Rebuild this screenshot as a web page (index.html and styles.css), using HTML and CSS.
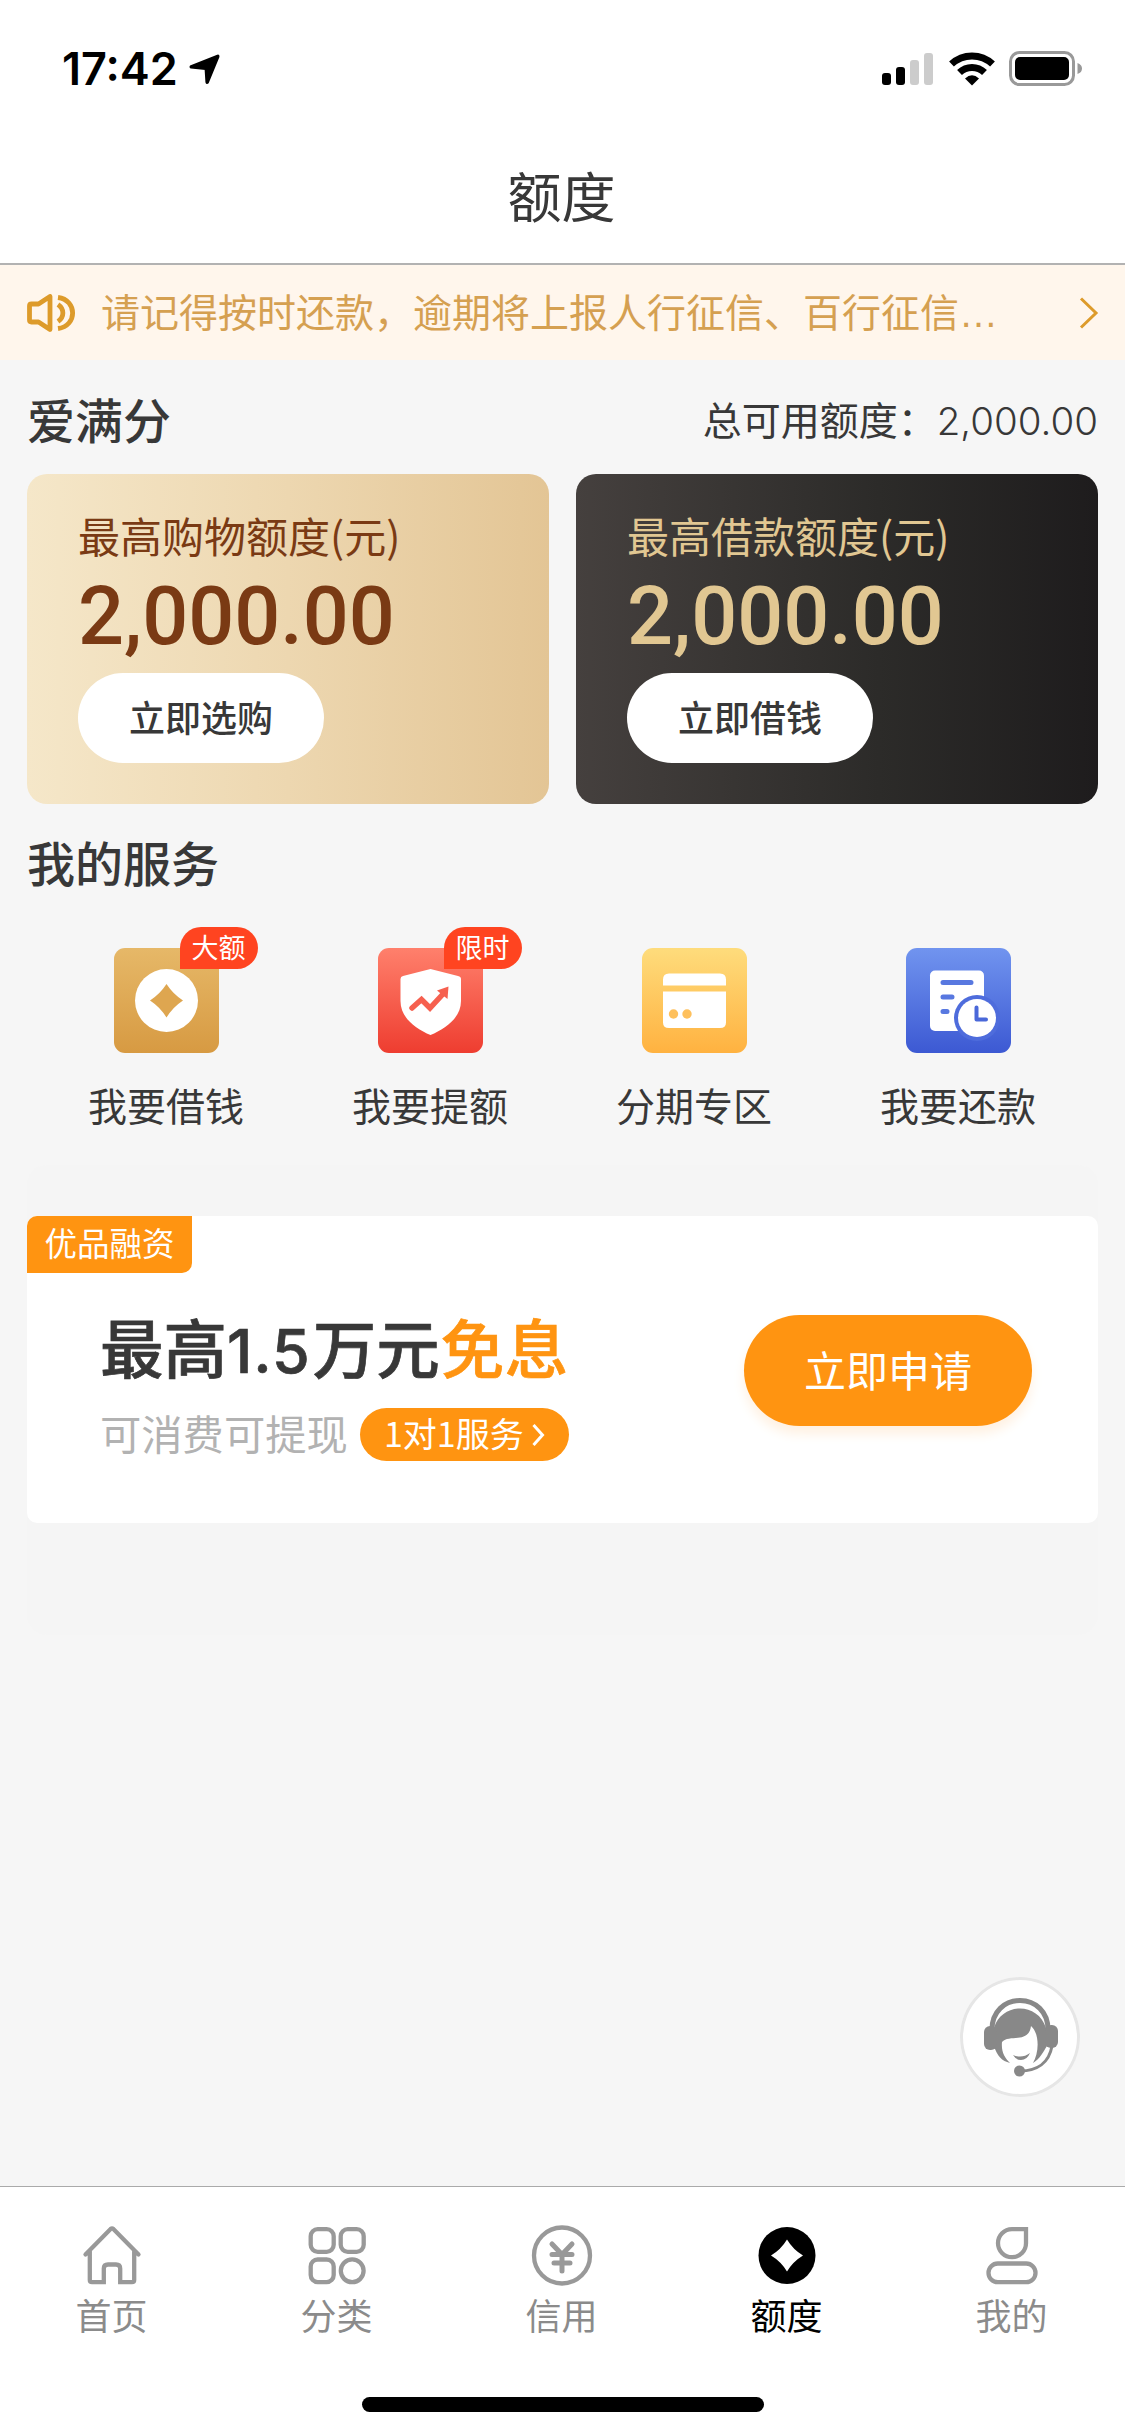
FILE: index.html
```html
<!DOCTYPE html>
<html lang="zh-CN">
<head>
<meta charset="utf-8">
<title>额度</title>
<link rel="stylesheet" href="styles.css">
</head>
<body>
<div class="app">
  <header class="status">
    <div class="status-left">
      <span class="time">17:42</span>
      <svg class="loc" width="31" height="31" viewBox="0 0 31 31"><path d="M28.500 1.500L2 12Q.8 13 2 13.700L16.500 15.200L17.300 28Q17.700 29.800 19 28.500L29.500 3Q29.900 1 28.500 1.500Z" stroke="#000" stroke-width="1.800" stroke-linejoin="round"/></svg>
    </div>
    <div class="status-right">
      <svg width="54" height="34" viewBox="0 0 54 34"><rect x="1" y="21" width="9" height="12" rx="3"/><rect x="15" y="15" width="9" height="18" rx="3"/><rect x="29" y="8" width="9" height="25" rx="3" fill="#ccc"/><rect x="43" y="1" width="9" height="32" rx="3" fill="#ccc"/></svg>
      <svg width="46" height="34" viewBox="0 0 46 34"><g fill="none" stroke="#000" stroke-width="7"><path d="M2.500 12A30 30 0 0 1 43.500 12"/><path d="M10.500 20.500A18 18 0 0 1 35.500 20.500"/></g><path d="M23 33.500L16 26.500Q23 20 30 26.500Z"/></svg>
      <svg width="74" height="36" viewBox="0 0 74 36"><rect x="1.500" y="1.500" width="63" height="32" rx="9" fill="none" stroke="#999" stroke-width="3"/><rect x="6" y="6" width="54" height="23" rx="5"/><path d="M68.500 12Q73 13.500 73 17.500T68.500 23Z" fill="#999"/></svg>
    </div>
  </header>
  <h1 class="title">额度</h1>
  <div class="notice">
    <svg class="speaker" width="50" height="38" viewBox="0 0 50 38"><g fill="none" stroke="#dd9b2b" stroke-width="4.800" stroke-linejoin="round"><path d="M3.500 12Q3.500 10 5.500 10H12.500L24 2.500V35.500L12.500 28H5.500Q3.500 28 3.500 26Z"/><path d="M32 10.500C38.500 15 38.500 23 32 27.500"/><path d="M32 3.500C51.500 6 51.500 32 32 34.500"/></g></svg>
    <span class="notice-text">请记得按时还款，逾期将上报人行征信、百行征信<span class="dots">…</span></span>
    <svg width="20" height="32" viewBox="0 0 20 32"><path d="M2 1.500L17 16L2 30.500" fill="none" stroke="#dd9b2b" stroke-width="3"/></svg>
  </div>
  <main class="main">
    <div class="summary"><h2>爱满分</h2><p>总可用额度：<span class="total">2,000.00</span></p></div>
    <div class="cards">
      <section class="card gold"><p>最高购物额度(元)</p><strong>2,000.00</strong><button>立即选购</button></section>
      <section class="card dark"><p>最高借款额度(元)</p><strong>2,000.00</strong><button>立即借钱</button></section>
    </div>
    <h2 class="heading">我的服务</h2>
    <div class="services">
      <div class="service"><div class="tile t1">
        <svg viewBox="0 0 105 105"><circle cx="52.500" cy="52.500" r="31.500" fill="#fff"/><path d="M52.500 36Q59 46 69 52.500Q59 59 52.500 69.500Q46 59 36 52.500Q46 46 52.500 36Z" fill="#dea650"/></svg>
        <em>大额</em></div><span>我要借钱</span></div>
      <div class="service"><div class="tile t2">
        <svg viewBox="0 0 105 105"><path d="M52.500 21L80 28Q83 28.500 83 31V53C83 70 67 81 52.500 87C38 81 22.500 70 22.500 53V31Q22.500 28.500 25 28Z" fill="#fff"/><path d="M34 60L43.500 51.500L52 60L65 46" fill="none" stroke="#f6604f" stroke-width="5.500" stroke-linecap="round"/><path d="M59 42.500L70.500 38.500L69.500 51Z" fill="#f6604f"/></svg>
        <em>限时</em></div><span>我要提额</span></div>
      <div class="service"><div class="tile t3">
        <svg viewBox="0 0 105 105"><path d="M27 25.500H78Q84 25.500 84 31.500V37.500H21V31.500Q21 25.500 27 25.500ZM21 43.500H84V74.500Q84 80 78 80H27Q21 80 21 74.500Z" fill="#fff"/><circle cx="31.500" cy="66" r="4.700" fill="#fec05c"/><circle cx="45" cy="66" r="4.700" fill="#fec05c"/></svg>
        </div><span>分期专区</span></div>
      <div class="service"><div class="tile t4">
        <svg viewBox="0 0 105 105"><rect x="24" y="22.500" width="54" height="60.500" rx="5" fill="#fff"/><path d="M37 34.500H65M37 49H46M37 63.500H41" stroke="#5878e0" stroke-width="5" stroke-linecap="round"/><circle cx="71" cy="70" r="23" fill="#4e6cdc"/><circle cx="71" cy="70" r="19" fill="#fff"/><path d="M70.500 59.500V71.500H80" fill="none" stroke="#4a68d9" stroke-width="4" stroke-linecap="round" stroke-linejoin="round"/></svg>
        </div><span>我要还款</span></div>
    </div>
    <div class="promo"><section class="offer">
      <span class="tag">优品融资</span>
      <div class="offer-copy">
        <h3>最高<i>1.5</i>万元<b>免息</b></h3>
        <div class="offer-sub"><span>可消费可提现</span><span class="pill"><span>1对1服务</span><svg width="13" height="24" viewBox="0 0 13 24"><path d="M1.500 2L10.500 12L1.500 22" fill="none" stroke="#fff" stroke-width="3"/></svg></span></div>
      </div>
      <button class="apply">立即申请</button>
    </section></div>
  </main>
  <button class="support" aria-label="客服">
    <svg width="120" height="120" viewBox="0 0 120 120"><path d="M32 55C30 13 90 13 88 55" fill="none" stroke="#888" stroke-width="5"/><path d="M34 51C42 25 78 25 86 51L87 69C83 75 80 82 73 86C79 76 80 57 71 49C69 67 49 57 42 65C41 75 45 81 50 86C42 84 37 79 34 69Z" fill="#888"/><rect x="24" y="49" width="13" height="24" rx="6" fill="#888"/><rect x="85" y="48" width="13" height="23" rx="6" fill="#888"/><path d="M53 78Q62 82 70 76Q67 83 61 83Q56 83 53 78Z" fill="#888"/><path d="M92 69C89 86 77 94 60 94" fill="none" stroke="#888" stroke-width="3"/><circle cx="59.500" cy="94" r="5.500" fill="#888"/></svg>
  </button>
  <nav class="tabs">
    <div class="tab"><svg viewBox="0 0 64 64"><path d="M5.500 30.500L30.600 5Q32 3.800 33.400 5L58.500 30.500M9.800 27V56Q9.800 58.200 12 58.200H23.800V44.500Q23.800 40.500 28 40.500H36Q40.200 40.500 40.200 44.500V58.200H52Q54.200 58.200 54.200 56V27"/></svg><span>首页</span></div>
    <div class="tab"><svg viewBox="0 0 64 64"><rect x="5.700" y="5.200" width="23" height="22.600" rx="7"/><rect x="35.700" y="5.200" width="23" height="22.600" rx="7"/><rect x="5.700" y="35.500" width="23" height="22.600" rx="7"/><circle cx="47.200" cy="46.800" r="11.400"/></svg><span>分类</span></div>
    <div class="tab"><svg viewBox="0 0 64 64"><circle cx="32" cy="31.500" r="28"/><path d="M22 20L32 30.500L42 20M22 30.500H42M24 39H40M32 30.500V47" stroke-width="5"/></svg><span>信用</span></div>
    <div class="tab active"><svg viewBox="0 0 64 64"><circle cx="32" cy="31.500" r="28.500" fill="#000" stroke="none"/><path d="M32 15.500Q38 25.500 48 31.500Q38 37.500 32 47.500Q26 37.500 16 31.500Q26 25.500 32 15.500Z" fill="#fff" stroke="none"/></svg><span>额度</span></div>
    <div class="tab"><svg viewBox="0 0 64 64"><path d="M46 5.200V19A14 14 0 1 1 32 5.200Z" stroke-linejoin="miter"/><rect x="8.500" y="39.500" width="47" height="18.700" rx="9.300"/></svg><span>我的</span></div>
  </nav>
  <div class="home-row"><div class="home-indicator"></div></div>
</div>
</body>
</html>
```
FILE: styles.css
```css
* { box-sizing: border-box; margin: 0; padding: 0; }
body { font-family: "Noto Sans CJK SC", sans-serif; color: #383838; background: #f6f6f6; }
button { font: inherit; border: 0; color: inherit; }
svg { display: block; flex: none; }
.app { width: 1125px; height: 2436px; display: flex; flex-direction: column; position: relative; }

.status { height: 132px; padding: 6px 42px 0 62px; background: #fff; display: flex; justify-content: space-between; align-items: center; }
.status-left, .status-right { display: flex; align-items: center; }
.status-left { gap: 11px; }
.status-right { gap: 14px; }
.time { font: 600 45px/60px Inter, sans-serif; color: #000; }
.title { height: 133px; background: #fff; border-bottom: 2px solid #b2b2b2; font-size: 54px; font-weight: 400; line-height: 126px; text-align: center; padding-right: 2px; }
.notice { height: 95px; background: #fff6ec; color: #d5a051; display: flex; align-items: center; padding: 0 26px; }
.speaker { margin-right: 25px; }
.notice-text { flex: 1; font-size: 39px; line-height: 91px; height: 95px; white-space: nowrap; }
.dots { font-family: "Liberation Sans", sans-serif; }

.main { flex: 1; padding: 0 27px; }
.summary { height: 114px; display: flex; justify-content: space-between; align-items: center; padding-top: 1px; font-size: 39px; }
.total { font: 300 38.500px Inter, sans-serif; }
h2 { font-size: 48px; font-weight: 500; line-height: 72px; }
.cards { display: grid; grid-template-columns: 1fr 1fr; gap: 27px; }
.card { height: 330px; border-radius: 20px; padding: 31px 51px 0; display: flex; flex-direction: column; align-items: flex-start; }
.card p { font-size: 42px; line-height: 60px; }
.card strong { margin-top: 4px; font: 500 81px/96px Roboto, sans-serif; }
.card button { width: 246px; height: 90px; margin-top: 8px; padding-bottom: 4px; border-radius: 45px; background: #fff; color: #383838; font-size: 36px; font-weight: 500; }
.gold { background: linear-gradient(90deg, #f5e7c9, #edd7b0 50%, #e3c595); color: #7a3a14; }
.dark { background: linear-gradient(90deg, #45403e, #2c2b29 58%, #1e1c1d); color: #e1c792; }
.heading { margin-top: 21px; }
.services { display: grid; grid-template-columns: repeat(4, 264px); justify-content: center; margin-top: 51px; padding-right: 1px; }
.service { display: flex; flex-direction: column; align-items: center; font-size: 39px; line-height: 58px; gap: 22px; }
.tile { width: 105px; height: 105px; border-radius: 11px; position: relative; }
.tile em { position: absolute; left: 66px; top: -21px; width: 78px; height: 42px; border-radius: 21px 21px 21px 0; background: #ff4420; color: #fff; font-style: normal; font-size: 27px; line-height: 39px; text-align: center; }
.t1 { background: linear-gradient(#e6b868, #d79a42); }
.t2 { background: linear-gradient(#ff806c, #ee3d30); }
.t3 { background: linear-gradient(#fedc7c, #ffb240); }
.t4 { background: linear-gradient(#7194ef, #3c59d3); }

.promo { height: 470px; margin-top: 32px; padding-top: 51px; background: #f5f5f5; border-radius: 20px; }
.offer { height: 307px; background: #fff; border-radius: 10px; position: relative; display: flex; justify-content: space-between; align-items: flex-start; padding: 87px 66px 0 73px; }
.tag { position: absolute; left: 0; top: 0; width: 165px; height: 57px; border-radius: 10px 0 10px 0; background: #ff9411; color: #fff; font-size: 32.500px; line-height: 52px; text-align: center; }
.offer h3 { font-size: 63.500px; font-weight: 500; line-height: 84px; white-space: nowrap; -webkit-text-stroke: .7px; }
.offer i { margin: 0 2px 0 0; font: 500 61px/84px Inter, sans-serif; letter-spacing: 1px; }
.offer b { margin-left: 1px; font-weight: 500; color: #ff9411; letter-spacing: .5px; }
.offer-sub { display: flex; align-items: center; gap: 12px; font-size: 41.300px; height: 84px; line-height: 60px; color: #b2b2b2; }
.offer-sub > span:first-child { padding-bottom: 6px; }
.offer-sub .pill { display: flex; align-items: center; justify-content: center; gap: 8px; width: 209px; height: 53px; margin-top: -1px; border-radius: 27px; background: #ff9411; color: #fff; font-size: 34px; }
.pill span { padding-bottom: 4px; }
.apply { width: 288px; height: 111px; margin-top: 12px; padding-bottom: 5px; border-radius: 56px; background: #ff9411; color: #fff; font-size: 42px; box-shadow: 0 8px 12px #fff1e2; }

.support { position: absolute; left: 960px; top: 1977px; width: 120px; height: 120px; border-radius: 50%; background: #fff; box-shadow: inset 0 0 0 3px #e6e6e6; }
.tabs { height: 180px; background: #fff; border-top: 1px solid #aaa; display: grid; grid-template-columns: repeat(5, 225px); justify-content: center; }
.tab { display: flex; flex-direction: column; align-items: center; padding: 37px 2px 0 0; color: #8b8b8b; font-size: 36px; line-height: 52px; }
.tab svg { width: 64px; height: 64px; fill: none; stroke: #999; stroke-width: 4.300; stroke-linecap: round; }
.tab.active { color: #000; }
.home-row { height: 70px; background: #fff; display: flex; justify-content: center; align-items: flex-end; padding-bottom: 24px; }
.home-indicator { width: 402px; height: 15px; border-radius: 8px; background: #000; }
```
